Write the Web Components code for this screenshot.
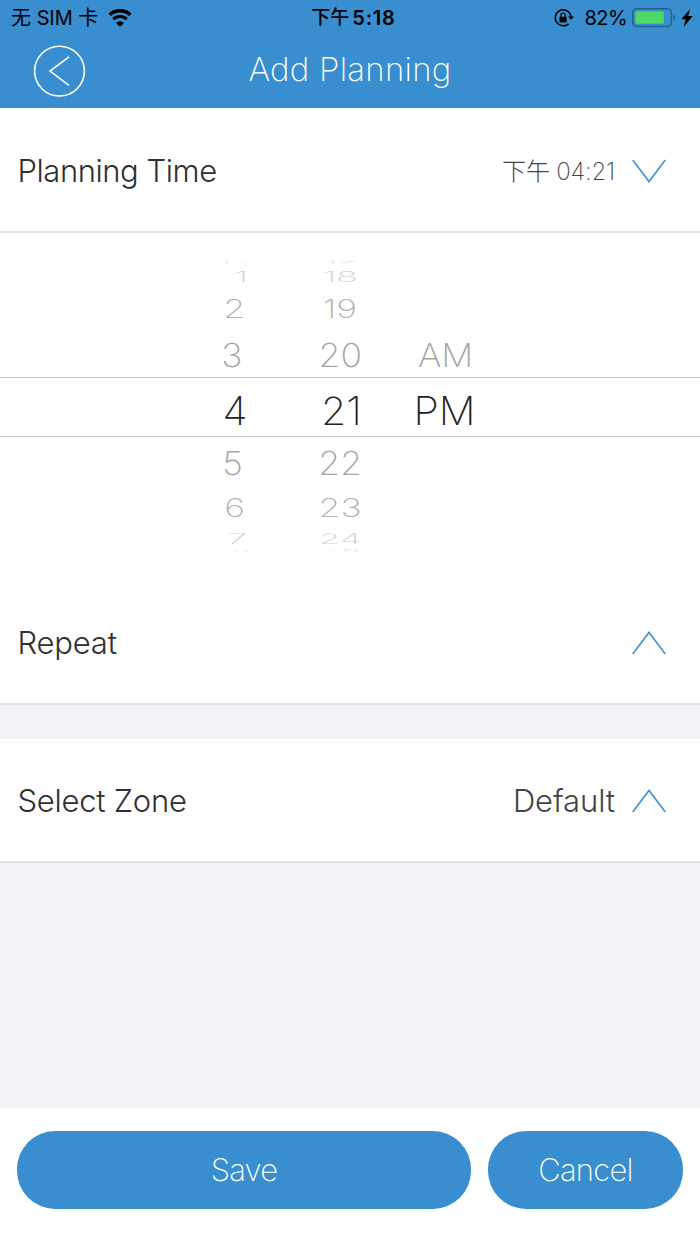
<!DOCTYPE html>
<html lang="en">
<head>
<meta charset="utf-8">
<title>Add Planning</title>
<style>
body {
  margin: 0;
  width: 700px;
  height: 1244px;
  overflow: hidden;
  font-family: Inter, "Noto Sans CJK SC", sans-serif;
  --blue: #388ece;
  --line: #e2e2e4;
}
</style>
</head>
<body>
<planning-page></planning-page>

<script>
function define(name, html) {
  const template = document.createElement("template");
  template.innerHTML = html;
  customElements.define(name, class extends HTMLElement {
    constructor() {
      super();
      this.attachShadow({ mode: "open" });
      this.shadowRoot.appendChild(template.content.cloneNode(true));
    }
  });
}

define("status-bar", `
<style>
:host {
  display: grid;
  grid-template-columns: 1fr auto 1fr;
  align-items: center;
  height: 36px;
  padding: 0 7px 0 11px;
  background: var(--blue);
  color: #000;
  font-size: 20px;
  line-height: 36px;
}
div { display: flex; align-items: center; }
svg { display: block; flex: none; }
.carrier { word-spacing: 0.2px; font-weight: 400; letter-spacing: -0.1px; }
.wifi { margin-left: 10px; }
.time { font-size: 19px; font-weight: 500; margin-left: 3px; }
.time b { font-size: 20px; font-weight: 600; letter-spacing: 0.8px; margin-left: 3px; }
.right { justify-content: flex-end; }
.percent { letter-spacing: -0.6px; margin: 0 5px 0 11px; }
.battery { margin-right: 4px; }
</style>
<div>
  <span class="carrier">无 SIM 卡</span>
  <svg class="wifi" width="24" height="18" viewBox="0 0 24 18">
    <path d="M1.6 5.8a15 15 0 0 1 20.8 0" fill="none" stroke="#000" stroke-width="3.6"/>
    <path d="M5.3 10.2a9.6 9.6 0 0 1 13.4 0" fill="none" stroke="#000" stroke-width="3.2"/>
    <path d="M12 17.8 8 13.9a5.6 5.6 0 0 1 8 0z"/>
  </svg>
</div>
<div class="time">下午<b>5:18</b></div>
<div class="right">
  <svg width="20" height="20" viewBox="0 0 20 20">
    <path d="M16.4 6.2A8 8 0 1 0 14.6 15.8" fill="none" stroke="#000" stroke-width="1.6"/>
    <path d="M16 5.4 17.2 9.5" stroke="#000" stroke-width="1.5"/>
    <path d="M14 8.4h6l-2.9 3.4z"/>
    <path d="M5.5 8.8h7.2v5.6H5.5z"/>
    <path d="M7 9V7.1a2.1 2.1 0 0 1 4.2 0V9" fill="none" stroke="#000" stroke-width="1.2"/>
  </svg>
  <span class="percent">82%</span>
  <svg class="battery" width="45" height="20" viewBox="0 0 45 20">
    <rect x="0.8" y="0.8" width="38.6" height="17.6" rx="3.8" fill="none" stroke="#24608c" stroke-width="1.5"/>
    <rect x="3.5" y="3.4" width="28.4" height="12.4" rx="1" fill="#4cd964"/>
    <path d="M41.4 6.4q1.9 1 1.9 3.2t-1.9 3.2z" fill="#24608c"/>
  </svg>
  <svg width="12" height="18" viewBox="0 0 12 18">
    <path d="M9 .1.4 10.2h4.3L2.6 17.9 11.8 7.1H7.2z"/>
  </svg>
</div>
`);

define("nav-bar", `
<style>
:host {
  display: grid;
  grid-template-columns: 100px 1fr 100px;
  align-items: center;
  height: 72px;
  box-sizing: border-box;
  padding-bottom: 2px;
  background: var(--blue);
  color: #fff;
}
svg { margin-left: 33px; display: block; }
h1 {
  margin: 0;
  padding-bottom: 4px;
  text-align: center;
  font-size: 33px;
  line-height: 40px;
  font-weight: 250;
  letter-spacing: 0.25px;
}
</style>
<svg width="53" height="53" viewBox="0 0 53 53" fill="none" stroke="#fff">
  <circle cx="26.5" cy="26.1" r="24.9" stroke-width="1.6"/>
  <path d="M36 11.9 17 26.1l19 14.2" stroke-width="1.6"/>
</svg>
<h1><slot></slot></h1>
`);

define("setting-row", `
<style>
:host {
  display: flex;
  align-items: center;
  height: 124px;
  box-sizing: border-box;
  padding: 2px 34px 0 17.5px;
  border-bottom: 2px solid var(--line);
  background: #fff;
  color: #303030;
  font-size: 31px;
  line-height: 40px;
  font-weight: 300;
}
.label { flex: 1; letter-spacing: var(--label-spacing, -0.2px); }
.value { margin-right: 17px; color: #444; letter-spacing: -0.1px; }
::slotted(small) {
  font-size: 24px;
  font-weight: 250;
  letter-spacing: -0.2px;
}
svg { display: block; }
:host([open]) svg { transform: scaleY(-1); }
</style>
<span class="label"><slot></slot></span>
<span class="value"><slot name="value"></slot></span>
<svg width="34" height="24" viewBox="0 0 34 24">
  <path d="M.7 23 17 1.4 33.3 23" fill="none" stroke="#3d94d6" stroke-width="1.6"/>
</svg>
`);

define("time-picker", `
<style>
:host {
  display: flex;
  position: relative;
  height: 348px;
  box-sizing: border-box;
  padding: 24px 0 0 175px;
  background: #fff;
}
/* the two hairlines round the selected row lie over the wheels */
.window {
  position: absolute;
  left: 0;
  right: 0;
  top: 144px;
  height: 58px;
  border-top: 1px solid #c8c8c8;
  border-bottom: 1px solid #c8c8c8;
}
</style>
<slot></slot>
<div class="window"></div>
`);

const CELLS = [
  { height: 12, scale: 0.1, color: "#e6e6e6" },
  { height: 16, scale: 0.45, color: "#d2d2d2" },
  { height: 48, scale: 0.78, color: "#b0b0b0" },
  { height: 44, scale: 1, color: "#a4a4a4" },
  { height: 67, scale: 1, color: "#222" },
  { height: 38, scale: 1, color: "#a4a4a4" },
  { height: 51, scale: 0.77, color: "#b0b0b0" },
  { height: 11, scale: 0.43, color: "#d2d2d2" },
  { height: 13, scale: 0.1, color: "#e2e2e2" }
];

class PickerWheel extends HTMLElement {
  constructor() {
    super();
    this.attachShadow({ mode: "open" });
  }

  connectedCallback() {
    const values = this.getAttribute("values").split(",");
    const shifts = (this.getAttribute("shifts") || "").split(",");
    const cells = values.map((value, i) => {
      const { height, scale, color } = CELLS[i];
      const stretch = i === 4 ? 1.05 : 1.08;
      return `<div class="${i === 4 ? "selected" : ""}" style="height:${height}px;color:${color}">
        <span style="transform:translateX(${shifts[i] || 0}px) scale(${stretch}, ${scale})">${value}</span>
      </div>`;
    });
    this.shadowRoot.innerHTML = `
      <style>
        :host { display: flex; flex-direction: column; width: var(--wheel-width, 106px); }
        div {
          display: flex;
          align-items: center;
          justify-content: center;
          font-size: 33px;
          font-weight: 250;
        }
        span { line-height: 34px; flex: none; }
        .selected { font-size: 39px; font-weight: 220; }
      </style>
      ${cells.join("")}`;
  }
}
customElements.define("picker-wheel", PickerWheel);

define("pill-button", `
<style>
:host { display: block; }
button {
  display: block;
  width: 100%;
  height: 78px;
  padding: 0;
  border: 0;
  border-radius: 38px;
  background: var(--blue);
  color: #fff;
  font: 220 31px/78px Inter, sans-serif;
  letter-spacing: -0.75px;
}
</style>
<button><slot></slot></button>
`);

define("planning-page", `
<style>
:host {
  display: flex;
  flex-direction: column;
  height: 1244px;
  background: #f2f1f6;
}
.time { height: 125px; --label-spacing: -0.45px; }
.zone { margin-top: 34px; --label-spacing: -0.25px; }
footer {
  display: flex;
  gap: 17px;
  height: 136px;
  margin-top: auto;
  padding: 23px 17px 0;
  box-sizing: border-box;
  background: #fff;
}
.save { flex: 1; }
.cancel { width: 195px; }
</style>
<status-bar></status-bar>
<nav-bar>Add Planning</nav-bar>
<setting-row class="time" open>Planning Time<small slot="value">下午 04:21</small></setting-row>
<time-picker>
  <picker-wheel values="12,1,2,3,4,5,6,7,8" shifts="4,10,3,1,4,2,4,6,10" style="--wheel-width:112px"></picker-wheel>
  <picker-wheel values="17,18,19,20,21,22,23,24,25" shifts="0,0,0,0,1,0,0,0,0" style="--wheel-width:106px"></picker-wheel>
  <picker-wheel values=",,,AM,PM" shifts="0,0,0,1,0" style="--wheel-width:104px"></picker-wheel>
</time-picker>
<setting-row>Repeat</setting-row>
<setting-row class="zone">Select Zone<span slot="value">Default</span></setting-row>
<footer>
  <pill-button class="save">Save</pill-button>
  <pill-button class="cancel">Cancel</pill-button>
</footer>
`);
</script>
</body>
</html>
